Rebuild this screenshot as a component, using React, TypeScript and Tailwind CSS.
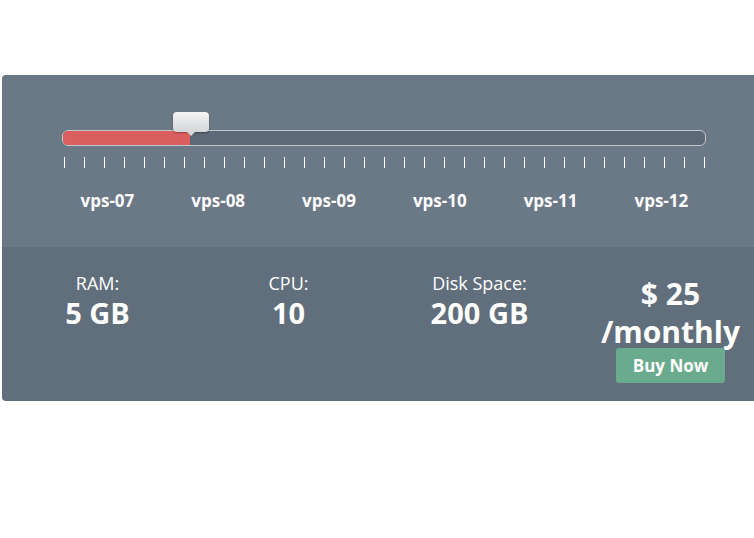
import React from 'react';

const plans = ['vps-07', 'vps-08', 'vps-09', 'vps-10', 'vps-11', 'vps-12'];
const ticks = Array.from({ length: 33 }, (_, i) => i);

const Spec: React.FC<{ label: string; value: string }> = ({ label, value }) => (
  <div className="w-[191px] flex flex-col items-center pt-[24px]">
    <span className="text-[18px] leading-[24px] text-white">{label}</span>
    <span className="text-[29px] leading-[36px] font-bold text-white">{value}</span>
  </div>
);

const App: React.FC = () => {
  return (
    <div className="w-full h-[538px] overflow-hidden bg-white pt-[75px] pl-[2px]" style={{ fontFamily: '"Open Sans", "Liberation Sans", sans-serif' }}>
      <div className="w-[764px] rounded-[4px] overflow-hidden">
        {/* slider */}
        <div className="h-[172px] bg-[#6b7886] pt-[55px]">
          <div className="relative ml-[60px] w-[644px] h-[16px] rounded-[6px] border border-[#c3c7cc] bg-[#5d6976]">
            <div className="h-full w-[127px] rounded-l-[5px] bg-[#dc5f5f]" />
            <div className="absolute left-[110px] top-[-19px] w-[36px] h-[20px] rounded-[4px] bg-gradient-to-b from-[#f4f4f4] to-[#d4d6d8] shadow-[0_1px_2px_rgba(0,0,0,0.35)]">
              <div className="absolute left-1/2 -translate-x-1/2 bottom-[-4px] w-0 h-0 border-l-[4px] border-r-[4px] border-t-[4px] border-l-transparent border-r-transparent border-t-[#d4d6d8]" />
            </div>
          </div>
          <div className="flex gap-[19px] ml-[62px] mt-[11px]">
            {ticks.map((t) => (
              <div key={t} className="w-px h-[11px] bg-white" />
            ))}
          </div>
          <div className="flex ml-[50px] mt-[22px]">
            {plans.map((p) => (
              <div key={p} className="w-[110.8px] text-center text-[17px] leading-[22px] font-bold text-white">
                {p}
              </div>
            ))}
          </div>
        </div>
        {/* details */}
        <div className="h-[154px] bg-[#616e7b] flex">
          <Spec label="RAM:" value="5 GB" />
          <Spec label="CPU:" value="10" />
          <Spec label="Disk Space:" value="200 GB" />
          <div className="w-[191px] flex flex-col items-center pt-[29px]">
            <span className="text-[30px] leading-[36px] font-bold text-white">$ 25</span>
            <span className="text-[30px] leading-[40px] font-bold text-white">/monthly</span>
            <button className="mt-[-4px] w-[109px] h-[35px] rounded-[3px] bg-[#6aaa8d] text-white text-[17px] font-bold">
              Buy Now
            </button>
          </div>
        </div>
      </div>
    </div>
  );
};

export default App;
